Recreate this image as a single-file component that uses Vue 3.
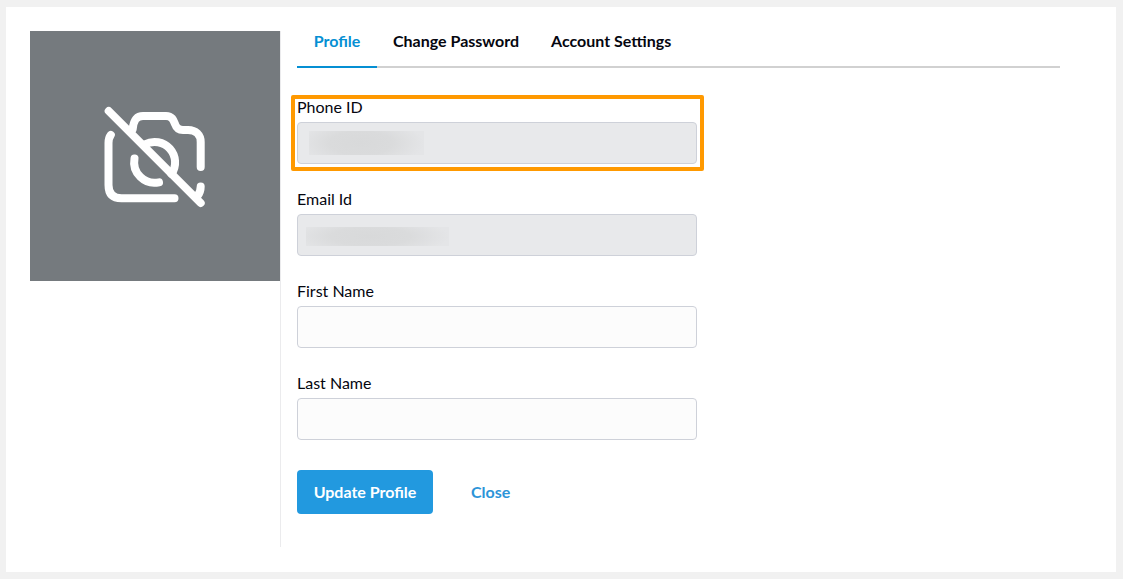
<script setup>
import { ref } from 'vue'

const tabs = ['Profile', 'Change Password', 'Account Settings']
const active = ref('Profile')
const firstName = ref('')
const lastName = ref('')
</script>

<template>
  <div class="page">
    <main class="card">
      <div class="side">
        <div class="photo">
          <svg viewBox="0 -1 130 125" class="camera" role="img" aria-label="No profile photo">
            <g fill="none" stroke="#fff" stroke-width="8" stroke-linecap="round" stroke-linejoin="round">
              <path d="M18.7 16L110.7 108" />
              <path d="M20.800 40Q18.500 43 18.500 48V90Q18.500 103.300 31.500 103.300H84.500" />
              <path d="M42.700 34C43.500 26 46 21 53 21H76C82 21 83.500 25 85 29C86.500 33.500 89 35 93 35H98C106 35 110.700 40 110.700 47V72" />
              <path d="M110.700 91.500Q110.700 97 107.500 101" />
              <path d="M55 49.300A20.500 20.500 0 0 1 81.500 79" />
              <path d="M44.500 63.500A20.500 20.500 0 0 0 69 87.300" />
            </g>
          </svg>
        </div>
      </div>

      <section class="content">
        <div class="tabs" role="tablist">
          <button
            v-for="tab in tabs"
            :key="tab"
            type="button"
            role="tab"
            class="tab"
            :class="{ active: tab === active }"
            :aria-selected="tab === active"
            @click="active = tab"
          >{{ tab }}</button>
        </div>

        <form class="form" @submit.prevent>
          <div class="field highlighted">
            <label for="phone">Phone ID</label>
            <div class="control">
              <input id="phone" type="text" disabled />
              <span class="mask mask-phone"></span>
            </div>
          </div>
          <div class="field">
            <label for="email">Email Id</label>
            <div class="control">
              <input id="email" type="email" disabled />
              <span class="mask mask-email"></span>
            </div>
          </div>
          <div class="field">
            <label for="first">First Name</label>
            <input id="first" v-model="firstName" type="text" />
          </div>
          <div class="field">
            <label for="last">Last Name</label>
            <input id="last" v-model="lastName" type="text" />
          </div>
          <div class="actions">
            <button type="submit" class="primary">Update Profile</button>
            <button type="button" class="link">Close</button>
          </div>
        </form>
      </section>
    </main>
  </div>
</template>

<style>
body {
  margin: 0;
  background: #f1f1f1;
}
</style>

<style scoped>
.page {
  box-sizing: border-box;
  min-height: 100vh;
  padding: 7px 7px 7px 6px;
  display: flex;
  background: #f1f1f1;
  color: #05060f;
  font: 16px/20px Lato, "Open Sans", sans-serif;
}
.card {
  box-sizing: border-box;
  flex: 1;
  display: flex;
  padding: 24px 56px 25px 24px;
  background: #fff;
}
.side {
  flex: none;
  border-right: 1px solid #ebebed;
}
.photo {
  width: 250px;
  height: 250px;
  display: flex;
  align-items: center;
  justify-content: center;
  background: #757a7e;
}
.camera {
  width: 130px;
  height: 125px;
}
.content {
  flex: 1;
  min-width: 0;
  padding-left: 16px;
}
button {
  border: 0;
  background: none;
  font: inherit;
  font-weight: 700;
  cursor: pointer;
}
.tabs {
  display: flex;
  border-bottom: 2px solid #d1d1d1;
}
.tab {
  min-width: 80px;
  margin-bottom: -2px;
  padding: 0 16px 15px;
  border-bottom: 2px solid transparent;
  color: #05060f;
}
.tab.active {
  border-color: #058fd3;
  color: #058fd3;
}
.form {
  max-width: 400px;
  padding-top: 29px;
  display: flex;
  flex-direction: column;
  gap: 25px;
}
.field {
  position: relative;
  display: flex;
  flex-direction: column;
  gap: 5px;
}
.highlighted::after {
  content: "";
  position: absolute;
  inset: -2px -7px -7px -6px;
  border: 4px solid #ff9900;
  border-radius: 2px;
  pointer-events: none;
}
.control {
  position: relative;
  display: flex;
}
input {
  box-sizing: border-box;
  width: 100%;
  height: 42px;
  padding: 0 12px;
  border: 1px solid #ced1d9;
  border-radius: 4px;
  background: #fcfcfc;
  color: inherit;
  font: inherit;
}
input:disabled {
  background: #e8e9eb;
}
.mask {
  position: absolute;
  background: radial-gradient(ellipse farthest-side at 45% 50%, #d8d9da, #dadbdc 50%, #e4e5e7);
  background-size: 100% 200%;
  background-position: center;
}
.mask-phone {
  left: 12px;
  top: 9px;
  width: 115px;
  height: 24px;
}
.mask-email {
  left: 9px;
  top: 13px;
  width: 143px;
  height: 19px;
}
.actions {
  display: flex;
  gap: 22px;
  padding-top: 5px;
}
.primary,
.link {
  height: 44px;
  padding: 0 16px;
  border-radius: 4px;
}
.primary {
  min-width: 136px;
  background: #2299df;
  color: #fff;
}
.link {
  color: #2c94d8;
}
</style>
